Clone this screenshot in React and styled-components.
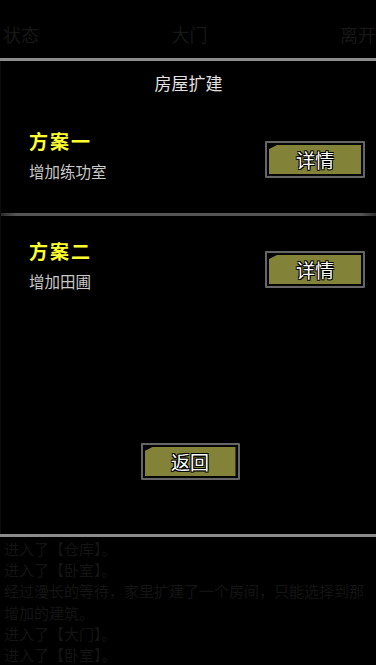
import React from "react";
import styled, { createGlobalStyle } from "styled-components";

const GlobalStyle = createGlobalStyle`
  html, body {
    margin: 0;
    padding: 0;
    background: #000;
  }
  body {
    font-family: "Noto Sans CJK SC", "Noto Sans", sans-serif;
  }
`;

const Screen = styled.div`
  width: 376px;
  height: 665px;
  overflow: hidden;
  display: flex;
  flex-direction: column;
  background: #000;
`;

const TopBar = styled.div`
  height: 58px;
  display: flex;
  align-items: center;
  justify-content: space-between;
  padding: 0 0 0 3px;
  box-sizing: border-box;
`;

const DimTab = styled.span`
  font-size: 18px;
  line-height: 22px;
  color: #171717;
  margin-top: 10px;
`;

const Rule = styled.div`
  height: 3px;
  flex: none;
  background: #8c8c8c;
`;

const Panel = styled.div`
  height: 473px;
  flex: none;
  display: flex;
  flex-direction: column;
  border-left: 1px solid #0c0c0c;
`;

const Title = styled.div`
  height: 45px;
  box-sizing: border-box;
  padding-top: 12px;
  text-align: center;
  font-size: 17px;
  line-height: 20px;
  color: #e2e2e2;
`;

const PlanRow = styled.div`
  height: 107px;
  box-sizing: border-box;
  padding: 22px 11px 0 28px;
  display: flex;
  justify-content: space-between;
  align-items: flex-start;
`;

const PlanText = styled.div`
  display: flex;
  flex-direction: column;
  gap: 6px;
`;

const PlanName = styled.div`
  font-size: 19px;
  line-height: 26px;
  font-weight: 700;
  letter-spacing: 2px;
  color: #ffff2e;
`;

const PlanDesc = styled.div`
  font-size: 15.5px;
  line-height: 22px;
  color: #c9c9c9;
`;

const Divider = styled.div`
  height: 3px;
  flex: none;
  background: linear-gradient(
    to right,
    #2a2a2a 0%,
    #555 4%,
    #555 96%,
    #2a2a2a 100%
  );
`;

const OliveButton = styled.button`
  width: ${(p) => p.$w || 100}px;
  height: 37px;
  margin-top: ${(p) => p.$top || 0}px;
  padding: 2px;
  box-sizing: border-box;
  border: 2px solid #666;
  border-radius: 1px;
  background: #050505;
  cursor: pointer;
  display: flex;
  flex: none;
`;

const ButtonFace = styled.span`
  flex: 1;
  display: flex;
  align-items: center;
  justify-content: center;
  background: #828239;
  clip-path: polygon(8px 0, 100% 0, 100% 100%, 0 100%, 0 4px);
  font-family: "Noto Sans CJK SC", sans-serif;
  font-size: 19px;
  color: #fff;
  text-shadow: 1px 1px 0 #000, -1px -1px 0 #000, 1px -1px 0 #000,
    -1px 1px 0 #000, 0 1px 0 #000, 0 -1px 0 #000;
`;

const BackWrap = styled.div`
  margin-top: auto;
  margin-bottom: 54px;
  padding-left: 3px;
  display: flex;
  justify-content: center;
`;

const Log = styled.div`
  flex: 1;
  padding: 1px 0 0 4px;
  overflow: hidden;
`;

const LogLine = styled.div`
  font-size: 15px;
  line-height: 21.2px;
  color: #141414;
  white-space: nowrap;
`;

const plans = [
  { name: "方案一", desc: "增加练功室" },
  { name: "方案二", desc: "增加田圃" },
];

const logs = [
  "进入了【仓库】。",
  "进入了【卧室】。",
  "经过漫长的等待，家里扩建了一个房间，只能选择到那",
  "增加的建筑。",
  "进入了【大门】。",
  "进入了【卧室】。",
];

export default function App() {
  return (
    <>
      <GlobalStyle />
      <Screen>
        <TopBar>
          <DimTab>状态</DimTab>
          <DimTab>大门</DimTab>
          <DimTab>离开</DimTab>
        </TopBar>
        <Rule />
        <Panel>
          <Title>房屋扩建</Title>
          {plans.map((p, i) => (
            <React.Fragment key={p.name}>
              {i > 0 && <Divider />}
              <PlanRow>
                <PlanText>
                  <PlanName>{p.name}</PlanName>
                  <PlanDesc>{p.desc}</PlanDesc>
                </PlanText>
                <OliveButton $top={13}>
                  <ButtonFace>详情</ButtonFace>
                </OliveButton>
              </PlanRow>
            </React.Fragment>
          ))}
          <BackWrap>
            <OliveButton $w={99}>
              <ButtonFace>返回</ButtonFace>
            </OliveButton>
          </BackWrap>
        </Panel>
        <Rule />
        <Log>
          {logs.map((l, i) => (
            <LogLine key={i}>{l}</LogLine>
          ))}
        </Log>
      </Screen>
    </>
  );
}
